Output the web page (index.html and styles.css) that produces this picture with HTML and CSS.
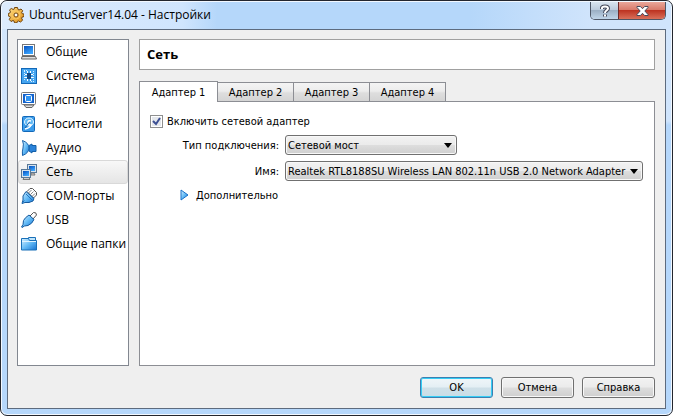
FILE: index.html
```html
<!DOCTYPE html>
<html lang="ru">
<head>
  <meta charset="UTF-8" />
  <meta name="viewport" content="width=device-width, initial-scale=1.0"/>
  <title>UbuntuServer14.04 - Настройки</title>
  <link rel="stylesheet" href="styles.css">
</head>
<body>

  <!-- shared gradients -->
  <svg class="defs" aria-hidden="true">
    <defs>
      <linearGradient id="screen" x1="0" y1="0" x2="0.6" y2="1">
        <stop offset="0" stop-color="#0650bd"/>
        <stop offset="1" stop-color="#3ba6ff"/>
      </linearGradient>
      <linearGradient id="sky" x1="0" y1="0" x2="1" y2="1">
        <stop offset="0" stop-color="#d8f1ff"/>
        <stop offset="0.5" stop-color="#64bbf6"/>
        <stop offset="1" stop-color="#1672d2"/>
      </linearGradient>
      <linearGradient id="gold" x1="0" y1="0" x2="1" y2="1">
        <stop offset="0" stop-color="#ffe08a"/>
        <stop offset="1" stop-color="#dd8a10"/>
      </linearGradient>
    </defs>
  </svg>

  <div class="window">
    <header class="titlebar">
      <svg class="icon" viewBox="0 0 16 16">
        <path d="M6.500.5h3l.5 2 1 .5 2-1 1.700 1.700-1 2 .5 1 1.800.3v2.500l-2 .7-.4 1 1 2L12.500 15l-2-1-1 .3-.5 1.500H6.500L6 14l-1-.5-2 1L1.300 12.500l1-2-.4-1L.3 9V6.500l1.700-.6.5-1-1-2L3.300 1.500l2 1 .8-.3z" fill="url(#gold)" stroke="#70430c"/>
        <circle cx="8" cy="8" r="4" fill="none" stroke="#f9c65c"/>
        <circle cx="8" cy="8" r="2" fill="#fff" stroke="#70430c"/>
      </svg>
      <h1 class="title">UbuntuServer14.04 - Настройки</h1>
      <div class="caption">
        <button class="help" aria-label="Помощь">
          <svg width="12" height="14" viewBox="0 0 12 14" fill="none">
            <path d="M3 5V4q0-1.500 3-1.500T9 4.500Q9 5.500 7.500 6.500T6 9M6 10.500v2" stroke="#45495a" stroke-width="4"/>
            <path d="M3 5V4q0-1.500 3-1.500T9 4.500Q9 5.500 7.500 6.500T6 9M6 10.500v2" stroke="#fff" stroke-width="2"/>
          </svg>
        </button>
        <button class="close" aria-label="Закрыть">
          <svg width="13" height="12" viewBox="0 0 13 12">
            <path d="M1 1.5h3.4l2.1 2.2 2.1-2.2H12v1L8.8 6l3.2 3.5v1H8.6L6.5 8.3l-2.1 2.2H1v-1L4.2 6 1 2.5z" fill="#fff" stroke="#45495a"/>
          </svg>
        </button>
      </div>
    </header>

    <main class="client">
      <div class="content">
        <nav class="sidebar">
          <a href="#general">
            <svg class="icon" viewBox="0 0 16 16">
              <rect x="1.5" y="0.5" width="12" height="11" fill="#fff" stroke="#777"/>
              <rect x="3" y="2" width="9" height="8" fill="url(#screen)"/>
              <path d="M1 12.5h13.500l1 2.500H.5z" fill="#ddd" stroke="#666"/>
            </svg>
            Общие
          </a>
          <a href="#system">
            <svg class="icon" viewBox="0 0 16 16">
              <rect x="0.5" y="0.5" width="15" height="15" fill="#46a5f0" stroke="#1268b8"/>
              <path d="M3.5 3v10M12.5 3v10M3 2.5h3M10 13.5h3" stroke="#d8f0ff" stroke-dasharray="1 1"/>
              <rect x="6" y="5" width="4" height="6" fill="#174a83"/>
              <path d="M6.5 3v2M9.5 3v2M6.5 11v2M9.500 11v2M4 6.5h2M4 9.5h2M10 6.5h2M10 9.5h2" stroke="#fff"/>
            </svg>
            Система
          </a>
          <a href="#display">
            <svg class="icon" viewBox="0 0 16 16">
              <path d="M3 13h10l-2 2.5H5z" fill="#ddd" stroke="#666"/>
              <rect x="0.5" y="0.5" width="14" height="12" rx="1" fill="#fff" stroke="#777"/>
              <rect x="2" y="2" width="11" height="9" fill="#1263ce"/>
              <rect x="4.5" y="3.5" width="6" height="6" rx="1" fill="#2f94f2" stroke="#fff"/>
            </svg>
            Дисплей
          </a>
          <a href="#storage">
            <svg class="icon" viewBox="0 0 16 16">
              <rect x="1.5" y="0.5" width="12" height="15" rx="1" fill="#3b9ceb" stroke="#1268b8"/>
              <ellipse cx="8" cy="6" rx="4.5" ry="4" fill="#5fb8f5" stroke="#e6f6ff"/>
              <path d="M10 5q-3-1-3 1.5T10 9q-1 3-6 4" fill="none" stroke="#fff" stroke-width="1.4"/>
              <path d="M8.500 6 4 12" stroke="#1560a8"/>
            </svg>
            Носители
          </a>
          <a href="#audio">
            <svg class="icon" viewBox="0 0 16 16">
              <path d="M8 5.5 11 4v1.500h4v6h-4V13l-3-2z" fill="#2a83da" stroke="#1560a8"/>
              <path d="M1.5.5Q8 3 8 8t-6.500 7.500Q1 12 2 8T1.500.5z" fill="url(#sky)" stroke="#1560a8"/>
            </svg>
            Аудио
          </a>
          <a href="#network" class="selected">
            <svg class="icon" viewBox="0 0 16 16">
              <path d="M10 9h3l1 2h-4z" fill="#ccc" stroke="#777"/>
              <rect x="6.5" y="0.5" width="9" height="8" fill="#d9e4ee" stroke="#597896"/>
              <rect x="8" y="2" width="6" height="5" fill="url(#screen)"/>
              <path d="M3 13.5h5l1 2H2z" fill="#ccc" stroke="#777"/>
              <rect x="0.5" y="5.5" width="9" height="8" fill="#d9e4ee" stroke="#597896"/>
              <rect x="2" y="7" width="6" height="5" fill="url(#screen)"/>
            </svg>
            Сеть
          </a>
          <a href="#serial">
            <svg class="icon" viewBox="0 0 16 16">
              <path d="m6 3.500 3-3h2.500l4 4V7l-3 3z" fill="#fff" stroke="#555"/>
              <path d="m7.500 5 3-3M9.500 6.500l3-3M11 8.500l3-3" stroke="#888"/>
              <path d="m5 3.500 8 7-1 2.500-4 1.500H4l-3 1 1-3.500V8z" fill="url(#sky)" stroke="#155a9e"/>
              <path d="m5 6 6 6M1 15l2.500-2.500" stroke="#2673bd"/>
            </svg>
            COM-порты
          </a>
          <a href="#usb">
            <svg class="icon" viewBox="0 0 16 16">
              <path d="m9 4 3.500-3.500q3-.5 3 2.500L12 7z" fill="#fff" stroke="#555"/>
              <path d="m8 3 5 4.500Q11 12 7 13.500l-3.500.5L1 15.500.5 15 2 12.500l.5-4Q4 5.500 8 3z" fill="url(#sky)" stroke="#155a9e"/>
            </svg>
            USB
          </a>
          <a href="#shared">
            <svg class="icon" viewBox="0 0 16 16">
              <path d="M7.5 4V1.500h7V5" fill="#bfe4fb" stroke="#1a70b8"/>
              <path d="M.5 14V2.500h7l1 2h7V14z" fill="url(#sky)" stroke="#1a70b8"/>
              <path d="M1 5.5h14" stroke="#dff3ff"/>
            </svg>
            Общие папки
          </a>
        </nav>

        <section class="page">
          <h2 class="heading">Сеть</h2>

          <div class="tabs" role="tablist">
            <button class="tab active" role="tab" aria-selected="true">Адаптер 1</button>
            <button class="tab" role="tab" aria-selected="false">Адаптер 2</button>
            <button class="tab" role="tab" aria-selected="false">Адаптер 3</button>
            <button class="tab" role="tab" aria-selected="false">Адаптер 4</button>
          </div>

          <div class="pane">
            <label class="enable">
              <input type="checkbox" checked>
              Включить сетевой адаптер
            </label>
            <div class="fields">
              <label for="attached">Тип подключения:</label>
              <select id="attached" class="short">
                <option>Сетевой мост</option>
              </select>
              <label for="adapter">Имя:</label>
              <select id="adapter">
                <option>Realtek RTL8188SU Wireless LAN 802.11n USB 2.0 Network Adapter</option>
              </select>
            </div>
            <button class="advanced" aria-expanded="false">
              <svg width="9" height="12" viewBox="0 0 9 12">
                <path d="M1 1v10l7-5z" fill="url(#sky)" stroke="#1a70c8"/>
              </svg>
              Дополнительно
            </button>
          </div>
        </section>
      </div>

      <footer class="actions">
        <button class="button default">OK</button>
        <button class="button">Отмена</button>
        <button class="button">Справка</button>
      </footer>
    </main>
  </div>

</body>
</html>
```

FILE: styles.css
```css
* {
  box-sizing: border-box;
}

body {
  margin: 0;
  background: #fff;
  color: #000;
  font-family: "DejaVu Sans Condensed", "DejaVu Sans", sans-serif;
  font-size: 11px;
}

button,
select {
  font: inherit;
  color: inherit;
}

.defs {
  position: absolute;
  width: 0;
  height: 0;
}

.icon {
  width: 16px;
  height: 16px;
  flex: none;
}

.window {
  display: flex;
  flex-direction: column;
  min-height: 100vh;
  padding: 0 6px 6px;
  border: 1px solid #23262e;
  border-radius: 7px;
  background: linear-gradient(#d3e6fc, #cfe4fc 120px, #b5d7fb 124px);
  box-shadow: inset 0 0 0 1px #f2f8ff;
}

.titlebar {
  display: flex;
  align-items: flex-start;
  height: 28px;
  margin: 0 -5px;
  padding: 0 5px 0 6px;
  border-top: 1px solid #f2f8ff;
  border-radius: 6px 6px 0 0;
  background: linear-gradient(90deg, #dcebfd, #d0e5fd 180px, #b5d7fa 215px, #b5d7fa 70%, #d0e4fc 88%);
}

.titlebar .icon {
  margin-top: 5px;
}

.title {
  flex: 1;
  margin: 0;
  padding-left: 5px;
  font: 12px/26px "Open Sans", "Noto Sans", sans-serif;
}

.caption {
  display: flex;
  height: 18px;
  border: 1px solid #4d5666;
  border-top: none;
  border-radius: 0 0 5px 5px;
  overflow: hidden;
}

.caption button {
  display: flex;
  align-items: center;
  justify-content: center;
  padding: 0;
  border: none;
}

.help {
  width: 27px;
  background: linear-gradient(#d9e4ef, #bccbdc 45%, #9cb0c5 50%, #c0d5e9);
}

.caption .close {
  width: 47px;
  border-left: 1px solid #6e2a2a;
  background: linear-gradient(#eaa79a, #d97b6b 45%, #bd3422 50%, #d9705a);
}

.client {
  display: flex;
  flex: 1;
  flex-direction: column;
  gap: 11px;
  padding: 9px 10px 10px 9px;
  border: 1px solid #5d6b7e;
  background: #efefef;
}

.content {
  display: flex;
  flex: 1;
  gap: 10px;
}

.sidebar {
  width: 112px;
  border: 1px solid #828790;
  background: #fff;
  font: 12px/22px "Open Sans", "Noto Sans", sans-serif;
}

.sidebar a {
  display: flex;
  align-items: center;
  gap: 9px;
  height: 24px;
  padding-left: 2px;
  border: 1px solid transparent;
  border-radius: 3px;
  color: #000;
  text-decoration: none;
  white-space: nowrap;
}

.sidebar .selected {
  border-color: #d9d9d9;
  background: linear-gradient(#f8f8f8, #e5e5e5);
}

.page {
  display: flex;
  flex: 1;
  flex-direction: column;
  min-width: 0;
}

.heading {
  margin: 0 0 11px;
  padding: 0 7px;
  border: 1px solid #a0a0a0;
  background: #fff;
  font: bold 13px/29px "Open Sans", "Noto Sans", sans-serif;
}

.tabs {
  display: flex;
  align-items: flex-end;
}

.tab {
  width: 76px;
  height: 19px;
  padding: 0;
  border: 1px solid #8c8e94;
  border-left: none;
  border-bottom: none;
  background: linear-gradient(#f4f4f4, #ececec 45%, #dedede 55%, #d4d4d4);
}

.tab.active {
  z-index: 1;
  width: 79px;
  height: 21px;
  margin-bottom: -1px;
  border-left: 1px solid #8c8e94;
  background: #fff;
}

.pane {
  flex: 1;
  padding: 12px 11px 12px 10px;
  border: 1px solid #8c8e94;
  background: #fff;
}

.enable {
  display: flex;
  align-items: center;
  gap: 4px;
  height: 15px;
}

.enable input {
  appearance: none;
  width: 13px;
  height: 13px;
  margin: 0;
  border: 1px solid #8e8f8f;
  background: #e4e7ec url("data:image/svg+xml,%3Csvg xmlns='http://www.w3.org/2000/svg' viewBox='0 0 11 11'%3E%3Cpath d='M2 5l3 3 4-6' fill='none' stroke='%233c4f93' stroke-width='2'/%3E%3C/svg%3E");
  box-shadow: inset 0 0 0 1px #fff;
}

.fields {
  display: grid;
  grid-template-columns: 129px 1fr;
  align-items: center;
  gap: 6px;
  margin-top: 6px;
}

.fields label {
  text-align: right;
}

select {
  appearance: none;
  width: 100%;
  height: 20px;
  padding: 0 13px 0 2px;
  border: 1px solid #707070;
  border-radius: 3px;
  background:
    url("data:image/svg+xml,%3Csvg xmlns='http://www.w3.org/2000/svg' width='8' height='5'%3E%3Cpath d='M0 0h8L4 5z'/%3E%3C/svg%3E") no-repeat right 4px center,
    linear-gradient(#f2f2f2, #ebebeb 48%, #dddddd 52%, #cfcfcf);
  box-shadow: inset 0 0 0 1px #f8f8f8;
}

.short {
  width: 172px;
}

.advanced {
  display: flex;
  align-items: center;
  gap: 7px;
  height: 16px;
  margin: 6px 0 0 30px;
  padding: 0;
  border: none;
  background: none;
}

.actions {
  display: flex;
  justify-content: flex-end;
  gap: 8px;
}

.button {
  width: 73px;
  height: 21px;
  padding: 0;
  border: 1px solid #707070;
  border-radius: 3px;
  background: linear-gradient(#f2f2f2, #ebebeb 48%, #dddddd 52%, #cfcfcf);
  box-shadow: inset 0 0 0 1px #f8f8f8;
}

.default {
  border-color: #3c7fb1;
  background: linear-gradient(#f0f6f9, #e4eff4 48%, #cfe0e8 52%, #c8dde6);
  box-shadow: inset 0 0 0 1px #35cdf5;
}
```
